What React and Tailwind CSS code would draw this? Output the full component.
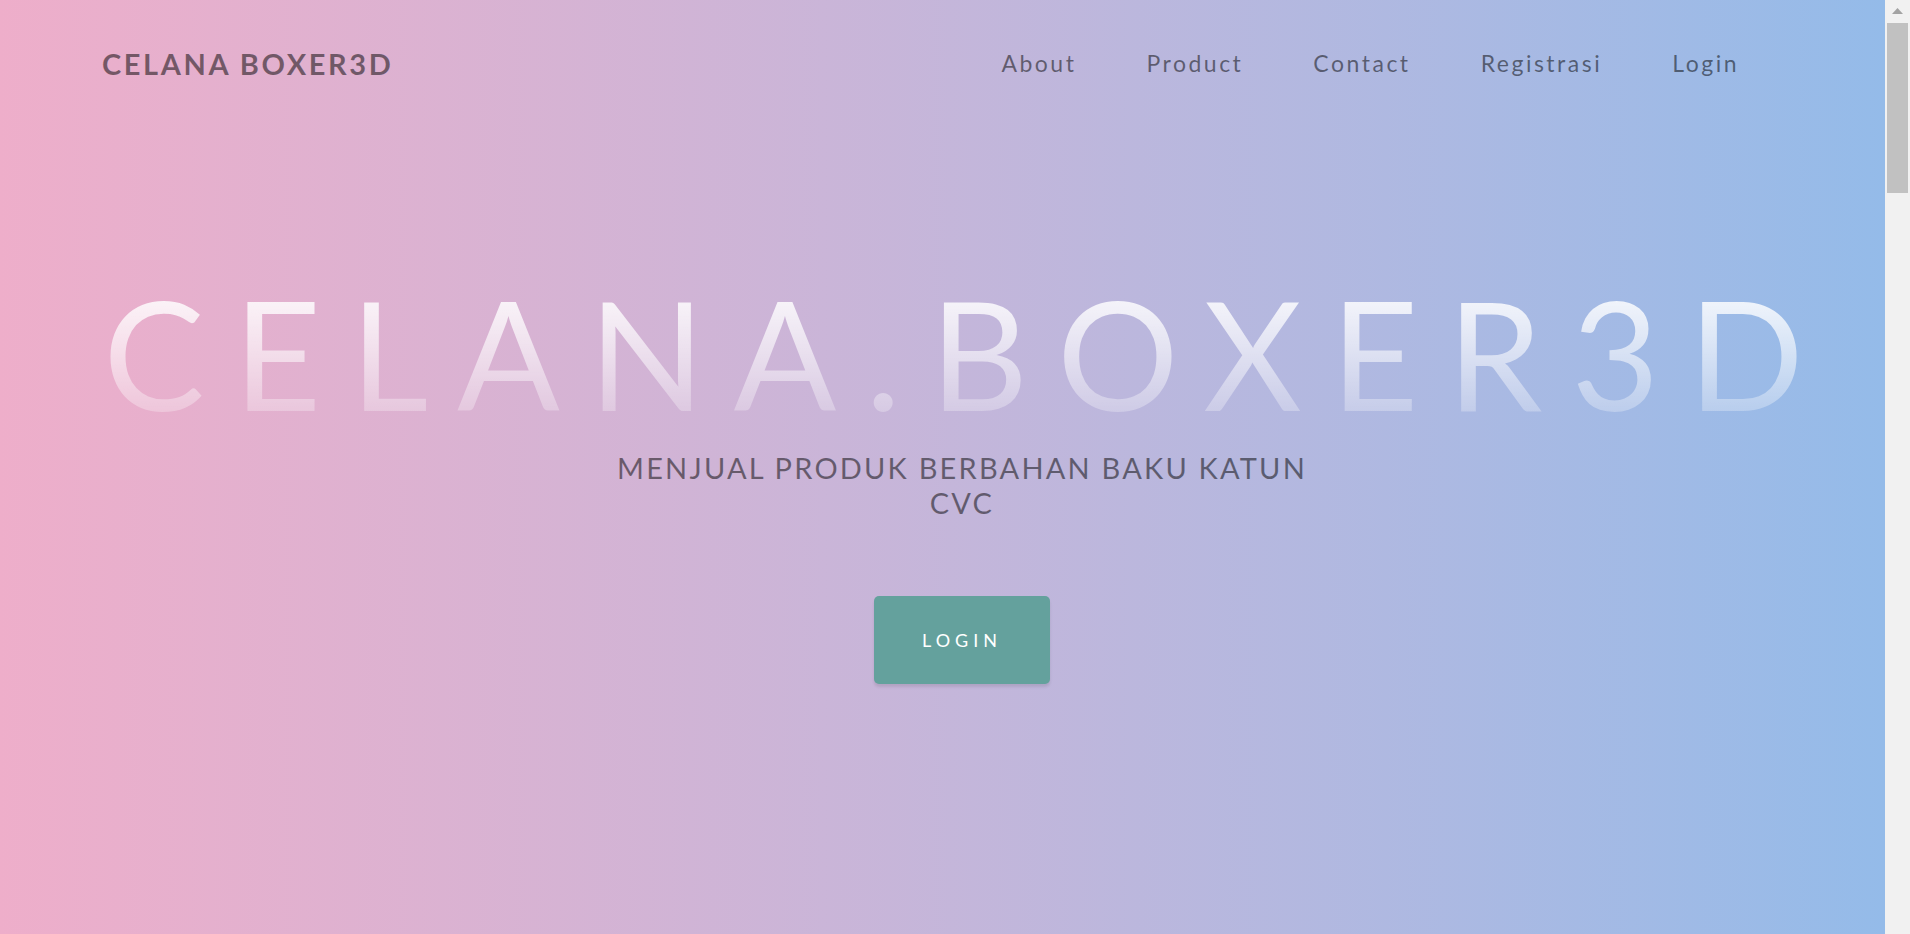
import React from "react";

const font = { fontFamily: "Lato, 'Noto Sans', 'Open Sans', sans-serif" };

function Nav() {
  const links = ["About", "Product", "Contact", "Registrasi", "Login"];
  return (
    <header className="flex h-[127px] items-center justify-between pl-[102px] pr-[146px]">
      <a className="text-[29px] font-bold tracking-[2.6px] text-black/50 leading-none">CELANA BOXER3D</a>
      <nav className="flex items-center gap-[70px]">
        {links.map((l) => (
          <a key={l} className="text-[23px] tracking-[2.5px] text-black/50 leading-none">
            {l}
          </a>
        ))}
      </nav>
    </header>
  );
}

function Scrollbar() {
  return (
    <div className="flex h-screen w-[25px] shrink-0 flex-col items-center bg-[#f1f1f1] pt-[8px]">
      <svg width="11" height="6" viewBox="0 0 11 6" className="block">
        <polygon points="5.5,0 11,6 0,6" fill="#a3a3a3" />
      </svg>
      <div className="mt-[9px] h-[170px] w-[21px] bg-[#c1c1c1]" />
    </div>
  );
}

export default function App() {
  return (
    <div className="flex h-screen w-full overflow-hidden" style={font}>
      <div className="flex flex-1 flex-col bg-linear-to-r from-[#eeaeca] to-[#94bbe9]">
        <Nav />
        <main className="flex flex-col items-center pl-[39px] pt-[149px]">
          <h1 className="bg-linear-to-b from-[rgba(255,255,255,0.97)] to-[rgba(255,255,255,0.2)] bg-clip-text pl-[12px] text-[152px] leading-none tracking-[28.8px] text-transparent">
            CELANA.BOXER3D
          </h1>
          <p className="mt-[22px] max-w-[730px] text-center text-[29px] leading-[35px] tracking-[2.2px] text-black/50">
            MENJUAL PRODUK BERBAHAN BAKU KATUN CVC
          </p>
          <a className="mt-[76px] flex h-[88px] w-[176px] items-center justify-center rounded-[5px] bg-[#64a19d] text-[18px] tracking-[5px] text-white shadow-[0_3px_3px_0_rgba(0,0,0,0.1)]">
            LOGIN
          </a>
        </main>
      </div>
      <Scrollbar />
    </div>
  );
}
